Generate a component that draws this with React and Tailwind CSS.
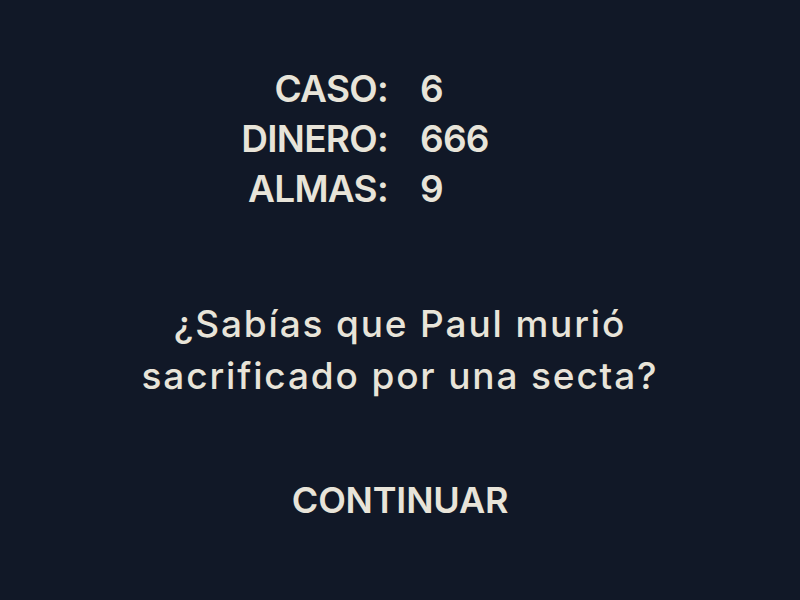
export default function App() {
  const rows = [
    ["CASO:", "6"],
    ["DINERO:", "666"],
    ["ALMAS:", "9"],
  ];
  return (
    <div
      className="w-[800px] h-[600px] bg-[#111827] text-[#e8e4d9] flex flex-col items-center overflow-hidden"
      style={{ fontFamily: "Inter, 'Noto Sans', sans-serif" }}
    >
      <div className="w-full pt-[64px] flex flex-col">
        {rows.map(([l, v]) => (
          <div key={l} className="flex h-[50px] items-center text-[37px] font-semibold tracking-[-0.02em]">
            <div className="w-[388px] text-right">{l}</div>
            <div className="pl-[32px]">{v}</div>
          </div>
        ))}
      </div>
      <div className="mt-[84px] text-center text-[37px] font-medium leading-[52px] tracking-[0.05em] whitespace-nowrap">
        <div>¿Sabías que Paul murió</div>
        <div>sacrificado por una secta?</div>
      </div>
      <button className="mt-[73px] text-[36px] font-semibold tracking-[-0.005em] leading-[50px]">
        CONTINUAR
      </button>
    </div>
  );
}
